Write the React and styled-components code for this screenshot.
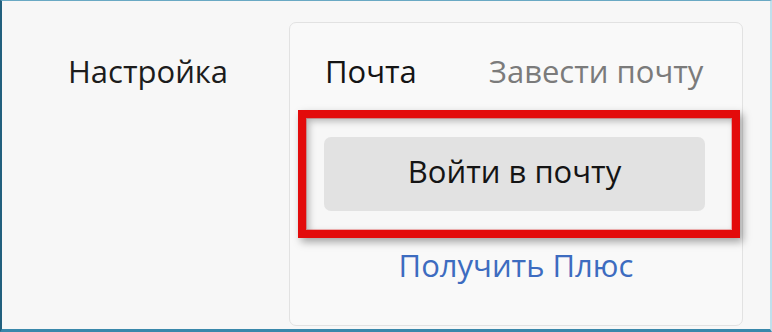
import React from 'react'
import styled, { createGlobalStyle } from 'styled-components';

const GlobalStyle = createGlobalStyle`
    html, body {
        margin: 0;
        padding: 0;
        background: #f7f7f7;
    }
    body {
        font-family: "Open Sans", "Liberation Sans", sans-serif;
    }
`

const Frame = styled.div`
    box-sizing: border-box;
    width: 772px;
    height: 332px;
    display: flex;
    align-items: flex-start;
    background-color: #f7f7f7;
    border-top: 1px solid #6aa9c4;
    border-left: 2px solid #22607e;
    border-right: 2px solid #bfe0ec;
    border-bottom: 3px solid #3a88ab;
`

const SideTitle = styled.div`
    width: 287px;
    padding: 50px 0 0 66px;
    box-sizing: border-box;
    font-size: 31px;
    line-height: 40px;
    color: #1c1c1c;
`

const Card = styled.div`
    box-sizing: border-box;
    width: 454px;
    height: 304px;
    margin-top: 21px;
    display: flex;
    flex-direction: column;
    background-color: #f9f9f9;
    border: 1px solid #e2e2e2;
    border-radius: 7px;
`

const Tabs = styled.div`
    display: flex;
    gap: 72px;
    padding: 28px 0 0 35px;
    height: 59px;
`

const Tab = styled.div`
    font-size: 31px;
    line-height: 40px;
    color: ${p => p.$active ? '#141414' : '#7b7b7b'};
`

const Highlight = styled.div`
    margin: 0 2px 0 8px;
    padding: 19px 27px 19px 18px;
    border: 8px solid #e30b0b;
    box-shadow: 3px 4px 8px rgba(0, 0, 0, 0.35), inset 3px 3px 7px rgba(0, 0, 0, 0.28), inset 0 0 0 1px #f6b3b3;
    background-color: #f7f7f7;
`

const LoginButton = styled.button`
    display: block;
    width: 100%;
    height: 74px;
    padding: 0 0 6px;
    border: none;
    border-radius: 7px;
    background-color: #e2e2e2;
    font-family: inherit;
    font-size: 31px;
    color: #141414;
    cursor: pointer;
`

const PlusLink = styled.a`
    display: block;
    margin-top: 7px;
    text-align: center;
    font-size: 31px;
    line-height: 40px;
    color: #3d6cc0;
    text-decoration: none;
    cursor: pointer;
`

function App() {
    return (
        <>
            <GlobalStyle />
            <Frame>
                <SideTitle>Настройка</SideTitle>
                <Card>
                    <Tabs>
                        <Tab $active>Почта</Tab>
                        <Tab>Завести почту</Tab>
                    </Tabs>
                    <Highlight>
                        <LoginButton>Войти в почту</LoginButton>
                    </Highlight>
                    <PlusLink>Получить Плюс</PlusLink>
                </Card>
            </Frame>
        </>
    )
}

export default App
